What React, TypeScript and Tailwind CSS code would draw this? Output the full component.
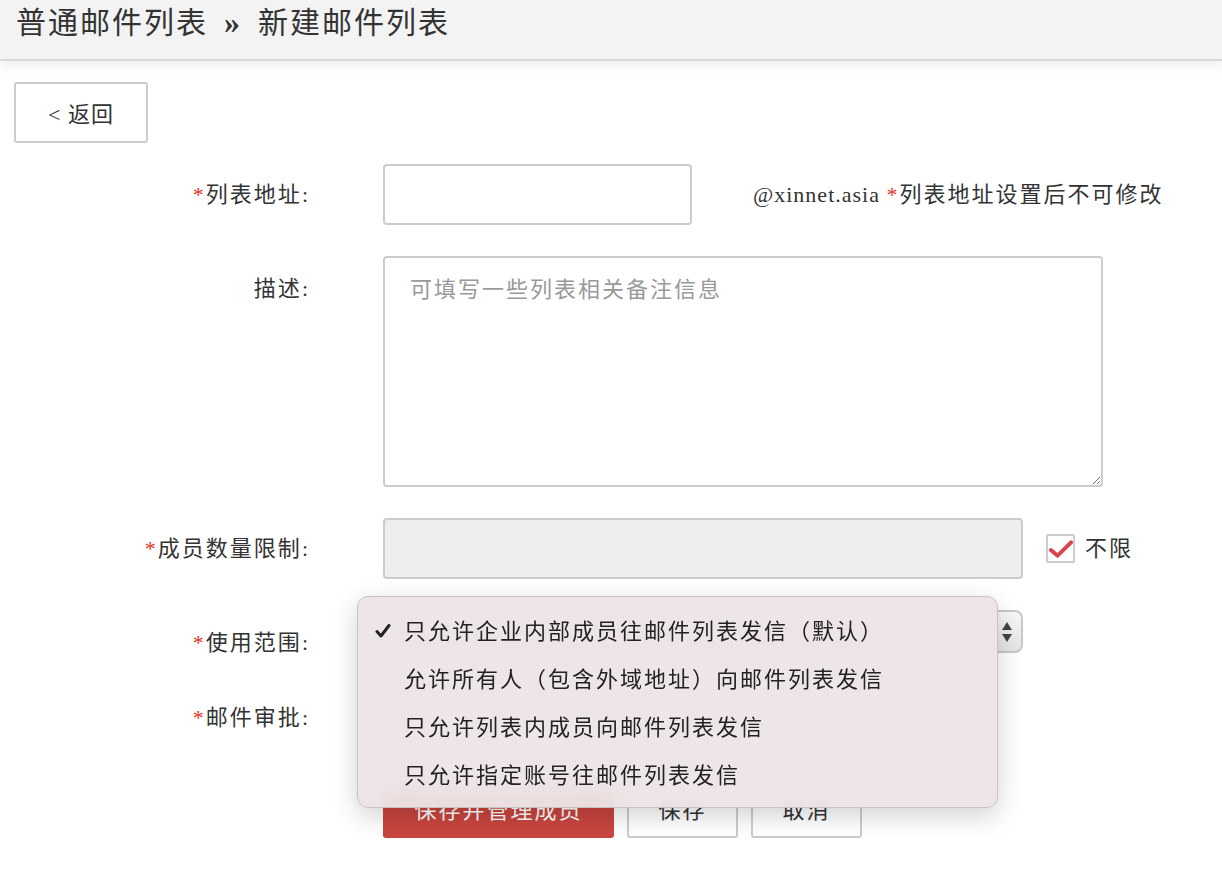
import React from 'react'

const font = { fontFamily: '"Liberation Serif", "Noto Sans CJK SC", serif' }

function Label({ text, required }: { text: string; required?: boolean }) {
  return (
    <div className="w-[310px] shrink-0 text-right text-[22px] tracking-[2px] text-[#333]">
      {required && <span className="text-[#e4312b]">*</span>}
      {text}:
    </div>
  )
}

const options = [
  '只允许企业内部成员往邮件列表发信（默认）',
  '允许所有人（包含外域地址）向邮件列表发信',
  '只允许列表内成员向邮件列表发信',
  '只允许指定账号往邮件列表发信',
]

export default function App() {
  return (
    <div className="min-h-[872px] bg-white text-[#333]" style={font}>
      <div className="h-[61px] bg-[#f3f3f3] border-b-2 border-[#d8d8d8] shadow-[0_4px_12px_rgba(0,0,0,0.08)] px-4">
        <h1 className="text-[30px] leading-[44px] tracking-[2px] text-[#333]">
          普通邮件列表<span className="font-bold text-[32px] mx-[16px]">»</span>新建邮件列表
        </h1>
      </div>

      <div className="px-[14px] pt-[21px]">
        <button className="w-[134px] h-[61px] border-2 border-[#ccc] rounded-[3px] bg-white text-[22px] tracking-[1px] text-[#333] pt-[3px]">
          &lt; 返回
        </button>
      </div>

      <div className="mt-[21px] flex flex-col gap-[31px]">
        <div className="flex items-center">
          <Label text="列表地址" required />
          <input className="ml-[73px] w-[309px] h-[61px] border-2 border-[#ccc] rounded-[4px] bg-white" />
          <div className="ml-[61px] text-[22px] text-[#333]">
            <span className="tracking-[1px]">@xinnet.asia </span>
            <span className="tracking-[2px]"><span className="text-[#e4312b]">*</span>列表地址设置后不可修改</span>
          </div>
        </div>

        <div className="flex items-start">
          <div className="pt-[16px]">
            <Label text="描述" />
          </div>
          <textarea
            placeholder="可填写一些列表相关备注信息"
            className="ml-[73px] w-[720px] h-[231px] border-2 border-[#ccc] rounded-[4px] bg-white px-[25px] py-[16px] text-[22px] leading-[32px] tracking-[2px] placeholder:text-[#999] resize"
            style={font}
          />
        </div>

        <div className="flex items-center">
          <Label text="成员数量限制" required />
          <input disabled className="ml-[73px] w-[640px] h-[61px] border-2 border-[#ccc] rounded-[4px] bg-[#eee]" />
          <div className="ml-[23px] flex items-center gap-[10px]">
            <div className="w-[29px] h-[29px] border-2 border-[#ccc] rounded-[2px] bg-white flex items-center justify-center">
              <svg width="26" height="22" viewBox="0 0 26 22">
                <path d="M3 12 L10 18 L24 4" fill="none" stroke="#d9434a" strokeWidth="4" strokeLinecap="round" strokeLinejoin="round" />
              </svg>
            </div>
            <span className="text-[22px] tracking-[2px]">不限</span>
          </div>
        </div>

        <div className="flex items-start h-[43px]">
          <div className="pt-[16px]">
            <Label text="使用范围" required />
          </div>
          <div className="relative ml-[73px]">
            <div className="w-[640px] h-[43px] border-2 border-[#c8c8c8] rounded-[8px] bg-gradient-to-b from-[#f8f8f8] to-[#e4e4e4] flex items-center justify-end pr-[8px]">
              <svg width="12" height="22" viewBox="0 0 12 22">
                <path d="M6 1 L11 9 L1 9 Z" fill="#444" />
                <path d="M6 21 L11 13 L1 13 Z" fill="#444" />
              </svg>
            </div>
            <div className="absolute left-[-26px] top-[-14px] w-[641px] h-[212px] rounded-[11px] border border-[#c4c4c4] bg-[rgba(236,227,228,0.94)] backdrop-blur-md shadow-[0_8px_26px_rgba(0,0,0,0.18)] pt-[10px] z-10">
              {options.map((o, i) => (
                <div key={i} className="h-[48px] flex items-center text-[22px] tracking-[2px] text-[#222]">
                  <span className="w-[46px] pl-[17px] flex items-center">
                    {i === 0 && (
                      <svg width="16" height="16" viewBox="0 0 16 16">
                        <path d="M2 8.5 L6 13 L14 2.5" fill="none" stroke="#222" strokeWidth="3" strokeLinecap="round" strokeLinejoin="round" />
                      </svg>
                    )}
                  </span>
                  <span>{o}</span>
                </div>
              ))}
            </div>
          </div>
        </div>

        <div className="flex items-center h-[44px] mt-[3px] pt-[16px]">
          <Label text="邮件审批" required />
        </div>
      </div>

      <div className="mt-[61px] ml-[383px] flex gap-[13px]">
        <button className="w-[231px] h-[46px] rounded-[3px] bg-[#c9463f] text-white text-[22px] tracking-[2px] pb-[10px]">保存并管理成员</button>
        <button className="w-[111px] h-[46px] rounded-[3px] border-2 border-[#ccc] bg-white text-[22px] tracking-[2px] pb-[10px]">保存</button>
        <button className="w-[111px] h-[46px] rounded-[3px] border-2 border-[#ccc] bg-white text-[22px] tracking-[2px] pb-[10px]">取消</button>
      </div>
    </div>
  )
}
